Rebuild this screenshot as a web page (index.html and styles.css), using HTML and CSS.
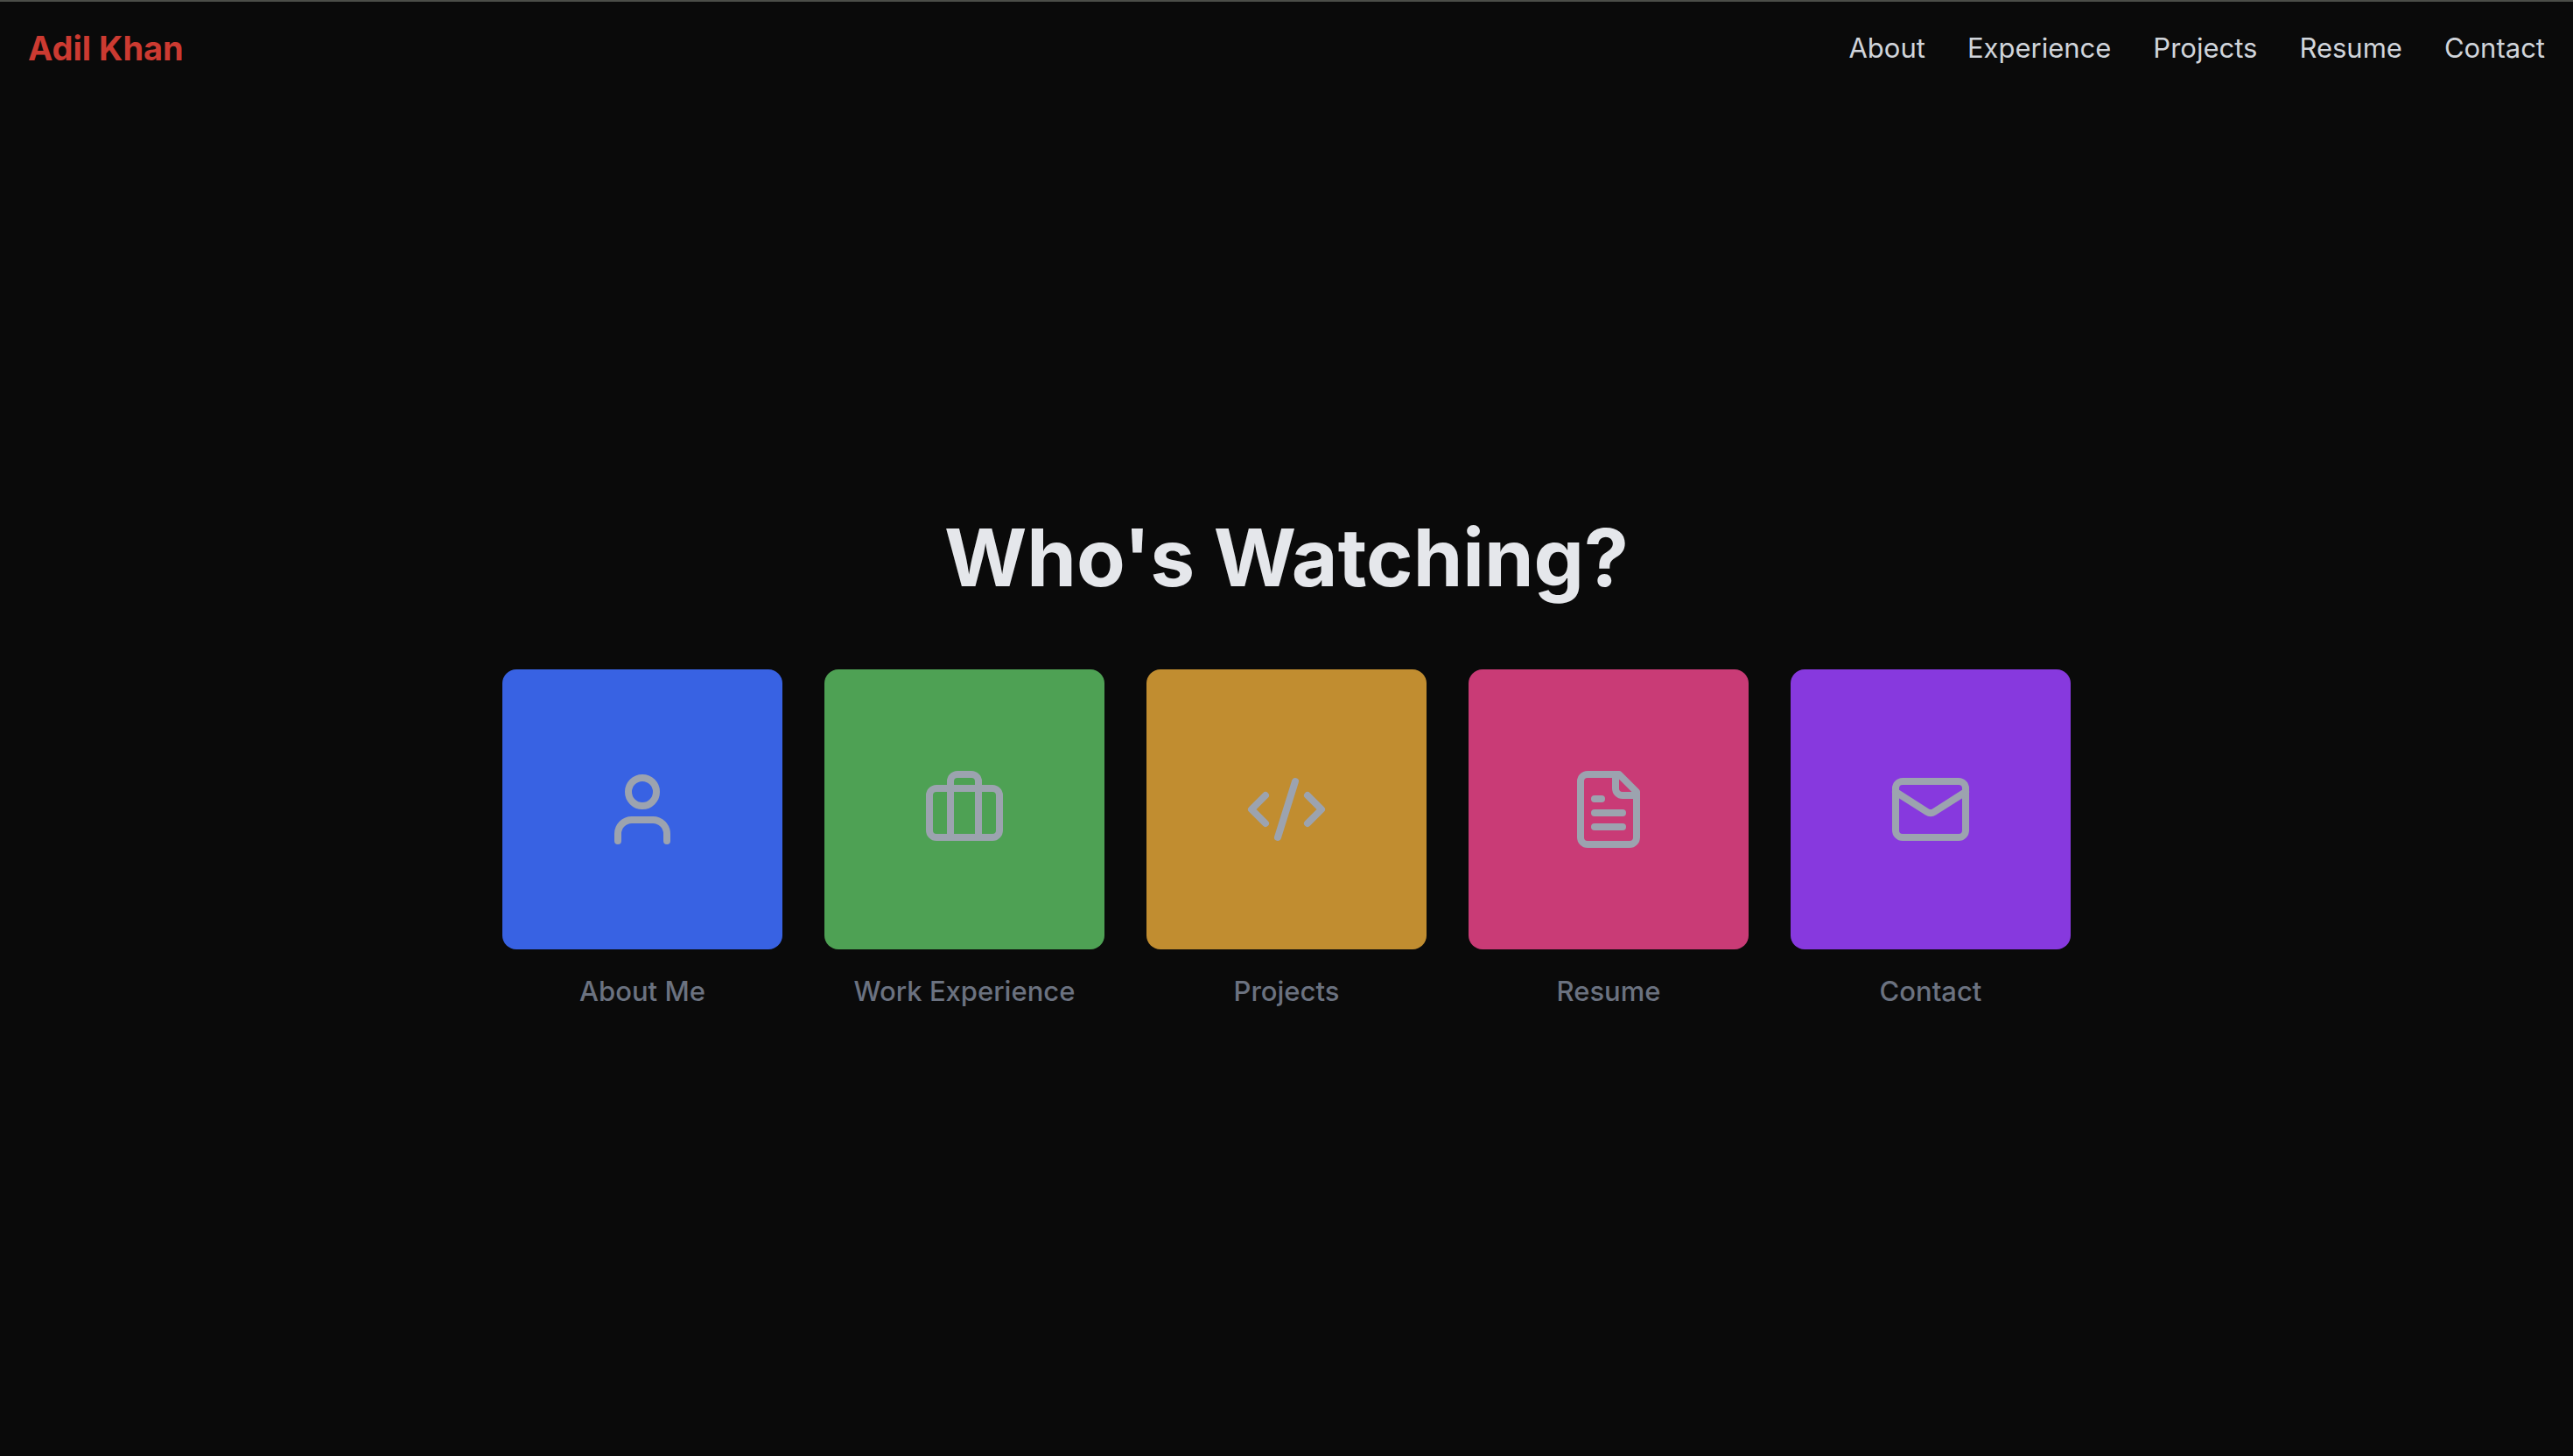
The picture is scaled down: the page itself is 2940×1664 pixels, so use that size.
FILE: index.html
```html
<!DOCTYPE html>
<html lang="en">
<head>
  <meta charset="utf-8">
  <meta name="viewport" content="width=device-width, initial-scale=1">
  <title>Adil Khan</title>
  <link rel="stylesheet" href="styles.css">
</head>
<body>
  <header class="site-header">
    <a class="logo" href="#home">Adil Khan</a>
    <nav class="site-nav" aria-label="Main">
      <a href="#about">About</a>
      <a href="#experience">Experience</a>
      <a href="#projects">Projects</a>
      <a href="#resume">Resume</a>
      <a href="#contact">Contact</a>
    </nav>
  </header>
  <main class="profiles">
    <h1 class="title">Who's Watching?</h1>
    <div class="profile-list">
      <a class="profile" href="#about">
        <span class="tile tile-blue">
          <svg class="icon" viewBox="0 0 24 24" aria-hidden="true"><path d="M19 21v-2a4 4 0 0 0-4-4H9a4 4 0 0 0-4 4v2"/><circle cx="12" cy="7" r="4"/></svg>
        </span>
        <span class="label">About Me</span>
      </a>
      <a class="profile" href="#experience">
        <span class="tile tile-green">
          <svg class="icon" viewBox="0 0 24 24" aria-hidden="true"><path d="M16 20V4a2 2 0 0 0-2-2h-4a2 2 0 0 0-2 2v16"/><rect width="20" height="14" x="2" y="6" rx="2"/></svg>
        </span>
        <span class="label">Work Experience</span>
      </a>
      <a class="profile" href="#projects">
        <span class="tile tile-amber">
          <svg class="icon" viewBox="0 0 24 24" aria-hidden="true"><path d="m18 16 4-4-4-4"/><path d="m6 8-4 4 4 4"/><path d="m14.500 4-5 16"/></svg>
        </span>
        <span class="label">Projects</span>
      </a>
      <a class="profile" href="#resume">
        <span class="tile tile-pink">
          <svg class="icon" viewBox="0 0 24 24" aria-hidden="true"><path d="M15 2H6a2 2 0 0 0-2 2v16a2 2 0 0 0 2 2h12a2 2 0 0 0 2-2V7Z"/><path d="M14 2v4a2 2 0 0 0 2 2h4"/><path d="M10 9H8"/><path d="M16 13H8"/><path d="M16 17H8"/></svg>
        </span>
        <span class="label">Resume</span>
      </a>
      <a class="profile" href="#contact">
        <span class="tile tile-purple">
          <svg class="icon" viewBox="0 0 24 24" aria-hidden="true"><rect width="20" height="16" x="2" y="4" rx="2"/><path d="m22 7-8.970 5.700a1.940 1.940 0 0 1-2.060 0L2 7"/></svg>
        </span>
        <span class="label">Contact</span>
      </a>
    </div>
  </main>
</body>
</html>
```
FILE: styles.css
```css
* {
  box-sizing: border-box;
}

body {
  display: flex;
  flex-direction: column;
  min-height: 100vh;
  margin: 0;
  border-top: 2px solid #4b4d48;
  background: #0a0a0a;
  font-family: Inter, "Liberation Sans", sans-serif;
}

a {
  text-decoration: none;
}

.site-header {
  display: flex;
  align-items: center;
  justify-content: space-between;
  padding: 26px 32px 0;
}

.logo {
  color: #cc3a31;
  font-size: 38px;
  font-weight: 700;
  line-height: 54px;
}

.site-nav {
  display: flex;
  gap: 48px;
}

.site-nav a {
  color: #d1d5db;
  font-size: 31px;
  line-height: 48px;
}

.profiles {
  display: flex;
  flex: 1;
  flex-direction: column;
  align-items: center;
  justify-content: center;
}

.title {
  margin: 0 0 80px;
  color: #e5e7eb;
  font-size: 91px;
  font-weight: 700;
  line-height: 96px;
}

.profile-list {
  display: flex;
  flex-wrap: wrap;
  justify-content: center;
  gap: 48px;
}

.profile {
  display: flex;
  flex-direction: column;
  align-items: center;
  gap: 24px;
}

.tile {
  display: grid;
  place-items: center;
  width: 320px;
  height: 320px;
  border-radius: 16px;
}

.tile-blue { background: #3862e3; }
.tile-green { background: #4ea154; }
.tile-amber { background: #c18d30; }
.tile-pink { background: #c93b76; }
.tile-purple { background: #8739de; }

.icon {
  width: 96px;
  height: 96px;
  fill: none;
  stroke: #9ca3af;
  stroke-width: 2;
  stroke-linecap: round;
  stroke-linejoin: round;
}

.label {
  color: #6b7280;
  font-size: 31px;
  font-weight: 500;
  line-height: 48px;
}
```
